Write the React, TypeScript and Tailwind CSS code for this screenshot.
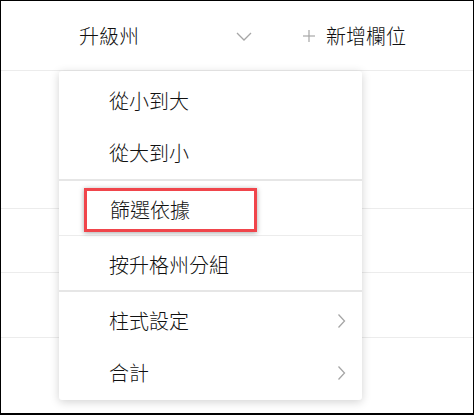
import React from "react";

const font = { fontFamily: '"Noto Sans CJK TC", "Noto Sans", sans-serif' };

function ChevronRight() {
  return (
    <svg width="9" height="16" viewBox="0 0 9 16" className="shrink-0">
      <polyline points="1.5,1.5 7.5,8 1.5,14.5" fill="none" stroke="#a6a6a6" strokeWidth="1.3" />
    </svg>
  );
}

function Item({ label, arrow }: { label: string; arrow?: boolean }) {
  return (
    <div className="flex h-[52px] items-center pl-[50px] pr-[16px] text-[20px] text-[#111]">
      <span className="flex-1">{label}</span>
      {arrow && <ChevronRight />}
    </div>
  );
}

export default function App() {
  return (
    <div
      className="relative h-[415px] w-[474px] overflow-hidden border-t border-l border-r border-b-2 border-black bg-white font-light"
      style={font}
    >
      <div className="flex h-[70px] items-center border-b border-[#ececec] text-[20px] text-[#111]">
        <span className="ml-[78px] w-[157px]">升級州</span>
        <svg width="16" height="9" viewBox="0 0 16 9" className="mt-[1px]">
          <polyline points="1,1 8,8 15,1" fill="none" stroke="#a6a6a6" strokeWidth="1.3" />
        </svg>
        <svg width="12" height="12" viewBox="0 0 12 12" className="ml-[51px]">
          <line x1="6" y1="0" x2="6" y2="12" stroke="#a6a6a6" strokeWidth="1.2" />
          <line x1="0" y1="6" x2="12" y2="6" stroke="#a6a6a6" strokeWidth="1.2" />
        </svg>
        <span className="ml-[11px]">新增欄位</span>
      </div>
      <div className="h-[138px] border-b border-[#ececec]" />
      <div className="h-[64px] border-b border-[#ececec]" />
      <div className="h-[65px] border-b border-[#ececec]" />

      <div className="absolute left-[58px] top-[70px] h-[329px] w-[303px] rounded-[3px] bg-white shadow-[0_2px_10px_rgba(0,0,0,0.18)]">
        <div className="pt-[4px]">
          <Item label="從小到大" />
          <Item label="從大到小" />
        </div>
        <div className="h-[2px] bg-[#e6e6e6]" />
        <div className="flex h-[54px] items-center pl-[51px] pt-[3px] text-[20px] text-[#111]">篩選依據</div>
        <div className="h-[1px] bg-[#ececec]" />
        <div className="flex h-[54px] items-center pl-[50px] pt-[3px] text-[20px] text-[#111]">按升格州分組</div>
        <div className="h-[2px] bg-[#e6e6e6]" />
        <div className="pt-[3px]">
          <Item label="柱式設定" arrow />
          <Item label="合計" arrow />
        </div>
        <div className="absolute left-[25px] top-[117px] h-[44px] w-[173px] border-[3px] border-[#f0454b] shadow-[0_1px_5px_rgba(0,0,0,0.35)]" />
      </div>
    </div>
  );
}
